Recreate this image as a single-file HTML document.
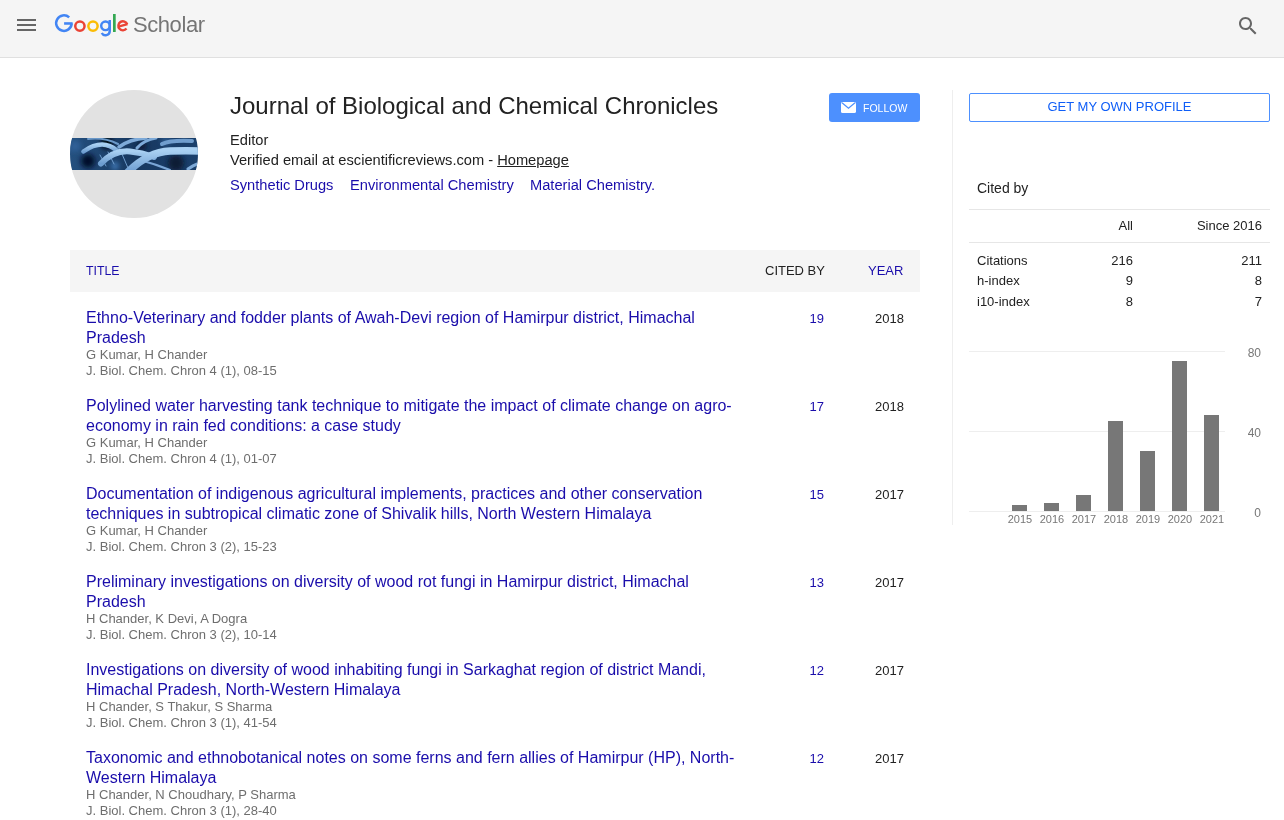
<!DOCTYPE html>
<html><head><meta charset="utf-8">
<style>
*{margin:0;padding:0;box-sizing:border-box}
html,body{width:1284px;height:820px;overflow:hidden;background:#fff}
body{font-family:"Liberation Sans",sans-serif;color:#222;position:relative}
.a{position:absolute;white-space:nowrap}
#hdr{position:absolute;left:0;top:0;width:1284px;height:58px;background:#f5f5f5;border-bottom:1px solid #e0e0e0}
.lnk{color:#1a0dab}
.gray{color:#777}
#band{position:absolute;left:70px;top:250px;width:850px;height:42px;background:#f5f5f5}
.row{position:absolute;left:86px;width:834px;height:88px}
.row .t{position:absolute;left:0;top:1px;width:660px;font-size:16px;line-height:20px;color:#1a0dab;white-space:normal}
.row .m{position:absolute;left:0;font-size:13px;line-height:16px;color:#6e6e6e;white-space:nowrap}
.row .c{position:absolute;right:96px;top:2px;font-size:13px;line-height:20px;color:#1a0dab;text-align:right}
.row .y{position:absolute;right:16px;top:2px;font-size:13px;line-height:20px;color:#222;text-align:right}
</style></head><body><div id="wrap" style="position:absolute;left:0;top:0;width:1284px;height:820px;will-change:transform">
<div id="hdr">
  <svg class="a" style="left:14px;top:13px" width="24" height="24" viewBox="0 0 24 24"><path fill="#666" d="M3 18h19v-2H3v2zm0-5h19v-2H3v2zm0-7v2h19V6H3z"/></svg>
  <svg class="a" style="left:0;top:0" width="220" height="57" viewBox="0 0 220 57">
    <g fill="none" stroke-linecap="butt">
      <path d="M69.19 17.43 A7.75 7.75 0 1 0 71.65 23.40" stroke="#4285f4" stroke-width="2.5"/>
      <circle cx="79.9" cy="26.1" r="4.65" stroke="#ea4335" stroke-width="2.5"/>
      <circle cx="93" cy="26.1" r="4.65" stroke="#fbbc05" stroke-width="2.5"/>
      <circle cx="105.5" cy="25.8" r="4.3" stroke="#4285f4" stroke-width="2.45"/>
      <path d="M109.75 20 V31.0 A4.25 4.25 0 0 1 101.75 33.00" stroke="#4285f4" stroke-width="2.45"/>
      <path d="M127.18 24.24 A4.55 4.55 0 1 0 126.49 28.60" stroke="#ea4335" stroke-width="2.4"/>
      <path d="M118.4 26.7 L127.48 24.14" stroke="#ea4335" stroke-width="2.3"/>
    </g>
    <rect x="64.1" y="22.2" width="8.5" height="2.55" fill="#4285f4"/>
    <rect x="113" y="14" width="2.7" height="18" fill="#34a853"/>
  </svg>
  <div class="a" style="left:133px;top:10px;font-size:22px;line-height:30px;color:#757575;letter-spacing:-0.43px">Scholar</div>
  <svg class="a" style="left:1236px;top:14px" width="24" height="24" viewBox="0 0 24 24"><path fill="#666" d="M15.5 14h-.79l-.28-.27C15.41 12.590 16 11.11 16 9.5 16 5.91 13.09 3 9.5 3S3 5.91 3 9.5 5.910 16 9.5 16c1.61 0 3.09-.59 4.23-1.57l.27.28v.79l5 4.99L20.49 19l-4.990-5zm-6 0C7.01 14 5 11.99 5 9.5S7.01 5 9.5 5 14 7.01 14 9.5 11.99 14 9.5 14z"/></svg>
</div>

<!-- avatar -->
<div class="a" style="left:70px;top:90px;width:128px;height:128px;border-radius:50%;background:#e2e2e2;overflow:hidden">
  <svg style="position:absolute;left:0;top:48px" width="128" height="32" viewBox="0 0 128 32">
    <defs>
      <linearGradient id="bg1" x1="0" y1="0" x2="1" y2="0"><stop offset="0" stop-color="#24507f"/><stop offset="0.5" stop-color="#173860"/><stop offset="1" stop-color="#1b406c"/></linearGradient>
      <filter id="bl" x="-50%" y="-50%" width="200%" height="200%"><feGaussianBlur stdDeviation="2.5"/></filter>
      <filter id="bl1"><feGaussianBlur stdDeviation="0.45"/></filter>
      <linearGradient id="fg" x1="0" y1="0" x2="0" y2="1"><stop offset="0" stop-color="#a9d0f2"/><stop offset="1" stop-color="#6d9dd0"/></linearGradient>
    </defs>
    <rect width="128" height="32" fill="url(#bg1)"/>
    <g filter="url(#bl)">
      <circle cx="37" cy="5" r="6" fill="#030814"/>
      <circle cx="18" cy="23" r="7" fill="#06112a"/>
      <circle cx="106" cy="25" r="8" fill="#0a1a34"/>
      <circle cx="72" cy="8" r="5" fill="#0b1d3a"/>
      <circle cx="5" cy="8" r="6" fill="#2f5f96"/>
      <circle cx="45" cy="28" r="4" fill="#3d74b0"/>
      <circle cx="96" cy="3" r="5" fill="#2a5588"/>
    </g>
    <g fill="none" stroke-linecap="round" filter="url(#bl1)">
      <path d="M18 1 Q34 -1 48 6" stroke="#6a98c8" stroke-width="2"/>
      <path d="M49 9 Q60 1 76 0" stroke="#7eaad8" stroke-width="3.5"/>
      <path d="M67 10 Q74 2 86 0" stroke="#7eaad8" stroke-width="3"/>
      <path d="M92 6 Q100 2 122 3" stroke="#6f9dcd" stroke-width="4"/>
      <path d="M30 17 L36 28 M38 14 L44 26 M52 16 L58 30" stroke="#6f9dcd" stroke-width="1"/>
      <path d="M70 22 Q85 26 100 32" stroke="#7aa6d6" stroke-width="2.2"/>
      <path d="M118 31 Q122 28 130 25" stroke="#7eaad8" stroke-width="3"/>
      <path d="M13.4 13.5 Q26 5 36 7 Q44 9 48 14" stroke="url(#fg)" stroke-width="4.5"/>
      <path d="M31 25.5 Q44 12 60 13.5 Q72 14.5 84 19" stroke="url(#fg)" stroke-width="6"/>
      <path d="M58 34 Q78 14 100 13 Q116 12.5 132 13" stroke="url(#fg)" stroke-width="7.5"/>
    </g>
  </svg>
</div>

<div class="a" style="left:230px;top:92px;font-size:24px;line-height:28px;color:#222">Journal of Biological and Chemical Chronicles</div>
<div class="a" style="left:230px;top:131px;font-size:14.67px;line-height:18px;color:#222">Editor</div>
<div class="a" style="left:230px;top:151px;font-size:14.67px;line-height:18px;color:#222">Verified email at escientificreviews.com - <span style="text-decoration:underline">Homepage</span></div>
<div class="a lnk" style="left:230px;top:176px;font-size:14.67px;line-height:18px">Synthetic Drugs</div>
<div class="a lnk" style="left:350px;top:176px;font-size:14.67px;line-height:18px">Environmental Chemistry</div>
<div class="a lnk" style="left:530px;top:176px;font-size:14.67px;line-height:18px">Material Chemistry.</div>

<!-- follow -->
<div class="a" style="left:829px;top:93px;width:91px;height:29px;background:#4d90fe;border-radius:3px"></div>
<svg class="a" style="left:841px;top:102px" width="15" height="11" viewBox="0 0 15 11"><rect x="0" y="0" width="15" height="11" rx="1.6" fill="#fff"/><path d="M1 0.8 L7.5 6.2 L14 0.8" fill="none" stroke="#4d90fe" stroke-width="1.2"/></svg>
<div class="a" style="left:863px;top:101px;font-size:10.5px;line-height:14px;color:#fff">FOLLOW</div>

<div id="band"></div>
<div class="a lnk" style="left:86px;top:263px;font-size:12.3px;line-height:16px">TITLE</div>
<div class="a" style="left:765px;top:263px;font-size:13px;line-height:16px;color:#222">CITED BY</div>
<div class="a lnk" style="left:868px;top:263px;font-size:13px;line-height:16px">YEAR</div>

<div class="row" style="top:307px">
  <div class="t">Ethno-Veterinary and fodder plants of Awah-Devi region of Hamirpur district, Himachal Pradesh</div>
  <div class="m" style="top:40px">G Kumar, H Chander</div>
  <div class="m" style="top:56px">J. Biol. Chem. Chron 4 (1), 08-15</div>
  <div class="c">19</div><div class="y">2018</div>
</div>
<div class="row" style="top:395px">
  <div class="t">Polylined water harvesting tank technique to mitigate the impact of climate change on agro-economy in rain fed conditions: a case study</div>
  <div class="m" style="top:40px">G Kumar, H Chander</div>
  <div class="m" style="top:56px">J. Biol. Chem. Chron 4 (1), 01-07</div>
  <div class="c">17</div><div class="y">2018</div>
</div>
<div class="row" style="top:483px">
  <div class="t">Documentation of indigenous agricultural implements, practices and other conservation techniques in subtropical climatic zone of Shivalik hills, North Western Himalaya</div>
  <div class="m" style="top:40px">G Kumar, H Chander</div>
  <div class="m" style="top:56px">J. Biol. Chem. Chron 3 (2), 15-23</div>
  <div class="c">15</div><div class="y">2017</div>
</div>
<div class="row" style="top:571px">
  <div class="t">Preliminary investigations on diversity of wood rot fungi in Hamirpur district, Himachal Pradesh</div>
  <div class="m" style="top:40px">H Chander, K Devi, A Dogra</div>
  <div class="m" style="top:56px">J. Biol. Chem. Chron 3 (2), 10-14</div>
  <div class="c">13</div><div class="y">2017</div>
</div>
<div class="row" style="top:659px">
  <div class="t">Investigations on diversity of wood inhabiting fungi in Sarkaghat region of district Mandi, Himachal Pradesh, North-Western Himalaya</div>
  <div class="m" style="top:40px">H Chander, S Thakur, S Sharma</div>
  <div class="m" style="top:56px">J. Biol. Chem. Chron 3 (1), 41-54</div>
  <div class="c">12</div><div class="y">2017</div>
</div>
<div class="row" style="top:747px">
  <div class="t">Taxonomic and ethnobotanical notes on some ferns and fern allies of Hamirpur (HP), North-Western Himalaya</div>
  <div class="m" style="top:40px">H Chander, N Choudhary, P Sharma</div>
  <div class="m" style="top:56px">J. Biol. Chem. Chron 3 (1), 28-40</div>
  <div class="c">12</div><div class="y">2017</div>
</div>

<!-- right column -->
<div class="a" style="left:952px;top:90px;width:1px;height:435px;background:#eee"></div>
<div class="a" style="left:969px;top:93px;width:301px;height:29px;border:1px solid #4d90fe;border-radius:2px"></div>
<div class="a" style="left:969px;top:99px;width:301px;text-align:center;font-size:13px;line-height:16px;color:#0f5ef7">GET MY OWN PROFILE</div>

<div class="a" style="left:977px;top:180px;font-size:14px;line-height:16px">Cited by</div>
<div class="a" style="left:969px;top:209px;width:301px;height:1px;background:#e6e6e6"></div>
<div class="a" style="left:969px;top:242px;width:301px;height:1px;background:#e6e6e6"></div>
<div class="a" style="right:151px;top:218px;font-size:13px;line-height:16px">All</div>
<div class="a" style="right:22px;top:218px;font-size:13px;line-height:16px">Since 2016</div>
<div class="a" style="left:977px;top:253px;font-size:13px;line-height:16px">Citations</div>
<div class="a" style="right:151px;top:253px;font-size:13px;line-height:16px">216</div>
<div class="a" style="right:22px;top:253px;font-size:13px;line-height:16px">211</div>
<div class="a" style="left:977px;top:273px;font-size:13px;line-height:16px">h-index</div>
<div class="a" style="right:151px;top:273px;font-size:13px;line-height:16px">9</div>
<div class="a" style="right:22px;top:273px;font-size:13px;line-height:16px">8</div>
<div class="a" style="left:977px;top:294px;font-size:13px;line-height:16px">i10-index</div>
<div class="a" style="right:151px;top:294px;font-size:13px;line-height:16px">8</div>
<div class="a" style="right:22px;top:294px;font-size:13px;line-height:16px">7</div>

<!-- chart -->
<svg class="a" style="left:960px;top:340px" width="324" height="200" viewBox="960 340 324 200">
  <g fill="#eeeeee">
    <rect x="969" y="351" width="256" height="1"/>
    <rect x="969" y="431" width="256" height="1"/>
    <rect x="969" y="511" width="256" height="1"/>
  </g>
  <g fill="#777">
    <rect x="1012" y="505" width="15" height="6"/>
    <rect x="1044" y="503" width="15" height="8"/>
    <rect x="1076" y="495" width="15" height="16"/>
    <rect x="1108" y="421" width="15" height="90"/>
    <rect x="1140" y="451" width="15" height="60"/>
    <rect x="1172" y="361" width="15" height="150"/>
    <rect x="1204" y="415" width="15" height="96"/>
  </g>
  <g fill="#777" font-family="Liberation Sans" font-size="11" text-anchor="middle">
    <text x="1020" y="523">2015</text>
    <text x="1052" y="523">2016</text>
    <text x="1084" y="523">2017</text>
    <text x="1116" y="523">2018</text>
    <text x="1148" y="523">2019</text>
    <text x="1180" y="523">2020</text>
    <text x="1212" y="523">2021</text>
  </g>
  <g fill="#777" font-family="Liberation Sans" font-size="12" text-anchor="end">
    <text x="1261" y="357">80</text>
    <text x="1261" y="437">40</text>
    <text x="1261" y="517">0</text>
  </g>
</svg>
</div></body></html>
